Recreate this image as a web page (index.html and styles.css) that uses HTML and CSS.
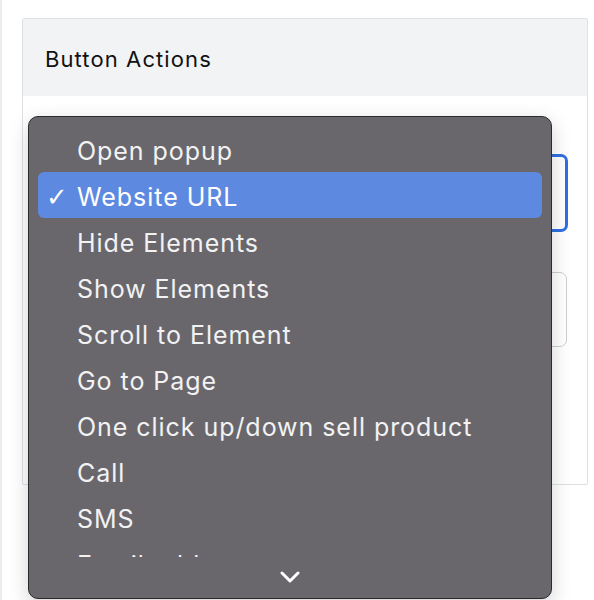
FILE: index.html
```html
<!DOCTYPE html>
<html>
<head>
<meta charset="utf-8">
<link rel="stylesheet" href="styles.css">
</head>
<body>
<div class="page">
  <div class="card">
    <div class="card-header">Button Actions</div>
    <div class="card-body">
      <div class="field field-focus"></div>
      <div class="field"></div>
    </div>
  </div>
  <div class="menu">
    <div class="menu-list">
      <div class="item">Open popup</div>
      <div class="item selected"><span class="check">✓</span>Website URL</div>
      <div class="item">Hide Elements</div>
      <div class="item">Show Elements</div>
      <div class="item">Scroll to Element</div>
      <div class="item">Go to Page</div>
      <div class="item">One click up/down sell product</div>
      <div class="item">Call</div>
      <div class="item">SMS</div>
      <div class="item">Email address</div>
    </div>
    <div class="menu-scroll">
      <svg width="20" height="14" viewBox="0 0 20 14"><polyline points="2,3 10,11 18,3" fill="none" stroke="#ffffff" stroke-width="3" stroke-linecap="round" stroke-linejoin="round"/></svg>
    </div>
  </div>
</div>
</body>
</html>
```
FILE: styles.css
```css
html, body {
  margin: 0;
  padding: 0;
  background: #ffffff;
  font-family: Inter, "Liberation Sans", Arial, sans-serif;
}
.page {
  position: relative;
  width: 594px;
  height: 600px;
  overflow: hidden;
  border-left: 2px solid #ececec;
  box-sizing: border-box;
  padding: 18px 0 0 20px;
}
.card {
  width: 566px;
  height: 467px;
  box-sizing: border-box;
  border: 1px solid #dde1e6;
  border-radius: 2px;
  background: #ffffff;
}
.card-header {
  height: 77px;
  background: #f2f3f5;
  box-sizing: border-box;
  padding: 27px 0 0 22px;
  font-size: 22px;
  color: #111111;
  letter-spacing: 1.1px;
}
.card-body {
  padding: 59px 19px 0 17px;
  display: flex;
  flex-direction: column;
  gap: 40px;
}
.field {
  height: 75px;
  border: 1px solid #cdcfd3;
  border-radius: 7px;
  box-sizing: border-box;
  margin-right: 1px;
}
.field-focus {
  height: 78px;
  border: 3px solid #2f6fe0;
  margin-right: 0;
  margin-top: -1px;
}
.menu {
  position: absolute;
  left: 26px;
  top: 116px;
  width: 524px;
  height: 483px;
  box-sizing: border-box;
  background: #69676c;
  border: 1px solid #2b2a2d;
  border-radius: 10px;
  box-shadow: 0 6px 20px rgba(0,0,0,0.18);
  display: flex;
  flex-direction: column;
  overflow: hidden;
}
.menu-list {
  height: 440px;
  overflow: hidden;
  padding: 9px 9px 0 9px;
  box-sizing: border-box;
  flex: none;
}
.item {
  height: 46px;
  box-sizing: border-box;
  padding-top: 3px;
  display: flex;
  align-items: center;
  padding-left: 39px;
  position: relative;
  font-size: 25px;
  letter-spacing: 0.95px;
  color: #f2f2f3;
  border-radius: 6px;
  white-space: nowrap;
}
.item.selected {
  background: #5e89e1;
  color: #ffffff;
}
.check {
  position: absolute;
  left: 8px;
  font-size: 26px;
  font-family: "DejaVu Sans", sans-serif;
  letter-spacing: 0;
}
.menu-scroll {
  flex: 1;
  display: flex;
  justify-content: center;
  align-items: flex-start;
  padding-top: 13px;
}
```
